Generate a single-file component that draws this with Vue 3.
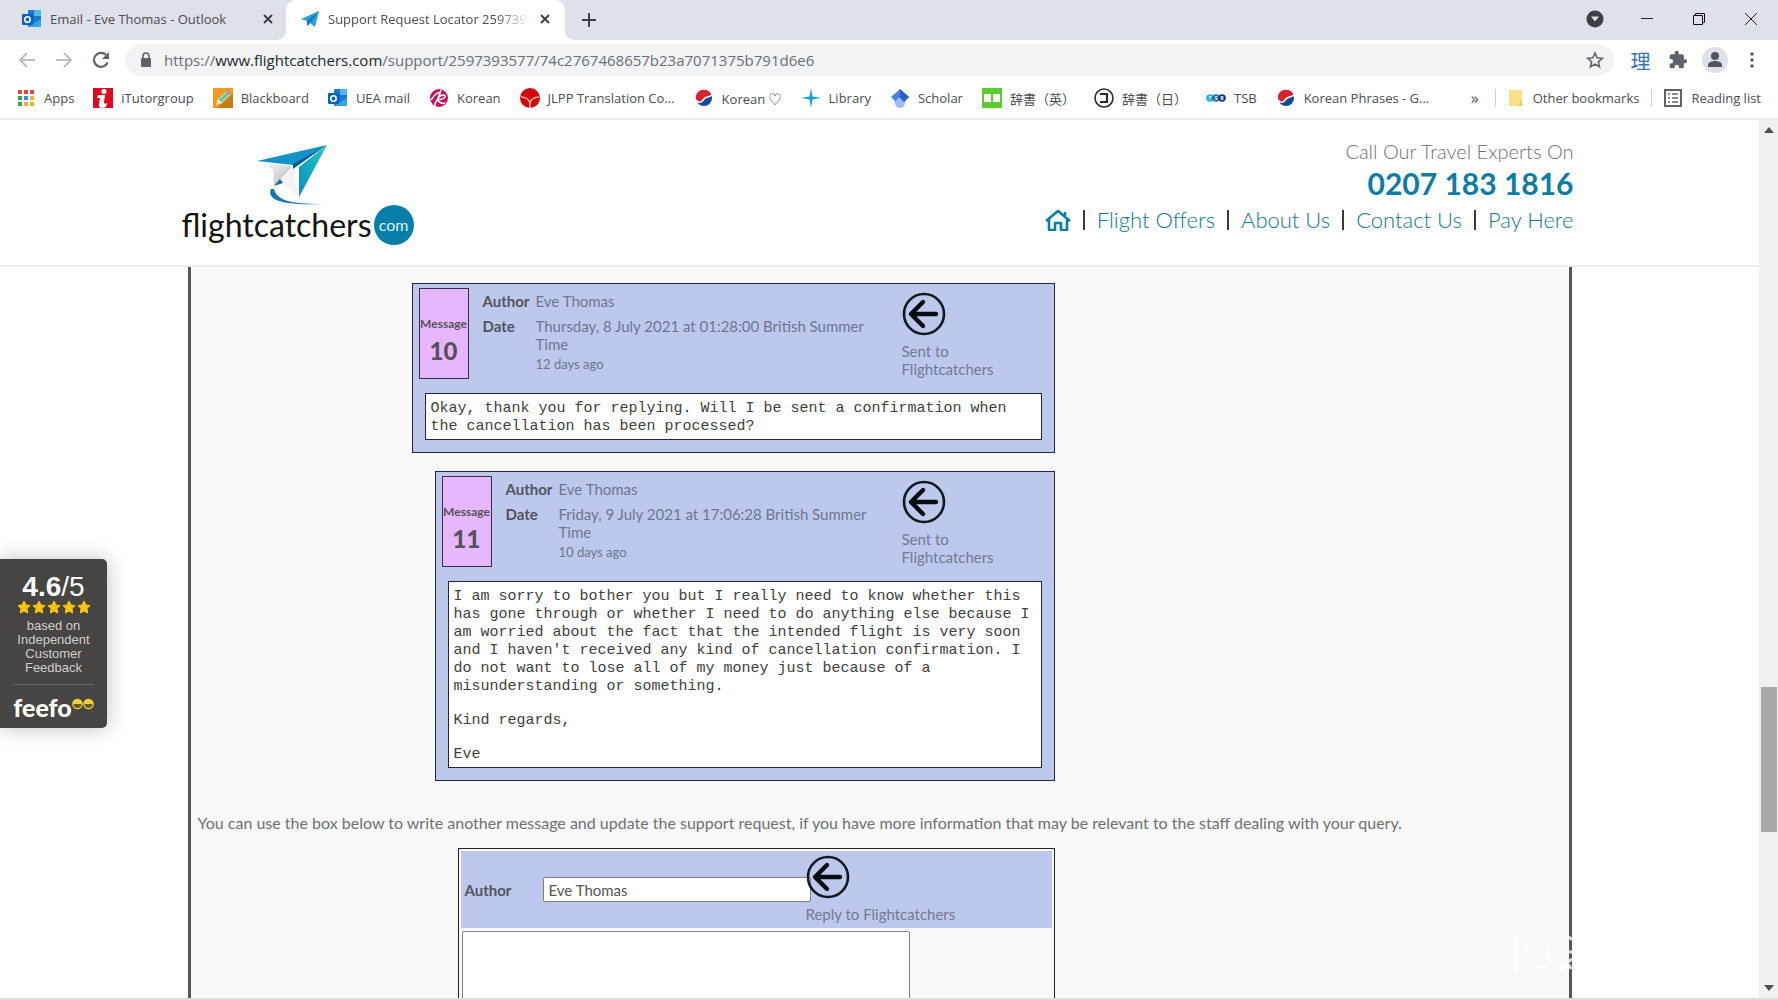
<script setup>
import { ref } from 'vue'

const tabs = ref([
  { title: "Email - Eve Thomas - Outlook", icon: "outlook", active: false },
  { title: "Support Request Locator 259739", icon: "plane", active: true },
]);

const bookmarks = [
  { title: "Apps", icon: "apps" },
  { title: "iTutorgroup", icon: "itutor" },
  { title: "Blackboard", icon: "pencil" },
  { title: "UEA mail", icon: "outlook" },
  { title: "Korean", icon: "pink" },
  { title: "JLPP Translation Co...", icon: "jlpp" },
  { title: "Korean ♡", icon: "taegeuk" },
  { title: "Library", icon: "spark" },
  { title: "Scholar", icon: "scholar" },
  { title: "辞書（英）", icon: "book" },
  { title: "辞書（日）", icon: "kotoba" },
  { title: "TSB", icon: "tsb" },
  { title: "Korean Phrases - G...", icon: "taegeuk" },
];

const links = ["Flight Offers", "About Us", "Contact Us", "Pay Here"];

const messages = [
  {
    number: 10,
    author: "Eve Thomas",
    date: "Thursday, 8 July 2021 at 01:28:00 British Summer Time",
    ago: "12 days ago",
    text: ["Okay, thank you for replying. Will I be sent a confirmation when the cancellation has been processed?"],
  },
  {
    number: 11,
    author: "Eve Thomas",
    date: "Friday, 9 July 2021 at 17:06:28 British Summer Time",
    ago: "10 days ago",
    text: [
      "I am sorry to bother you but I really need to know whether this has gone through or whether I need to do anything else because I am worried about the fact that the intended flight is very soon and I haven't received any kind of cancellation confirmation. I do not want to lose all of my money just because of a misunderstanding or something.",
      "Kind regards,",
      "Eve",
    ],
  },
];

const author = ref("Eve Thomas");
const reply = ref("");
const url = ref("/support/2597393577/74c2767468657b23a7071375b791d6e6");
</script>

<template>
  <div class="browser">
    <!-- icons used more than once -->
    <svg class="defs" width="0" height="0" aria-hidden="true">
      <symbol id="outlook" viewBox="0 0 20 20">
        <rect x="6" y="1" width="13" height="17" rx="1" fill="#1a78d0" />
        <path d="M12 1h7v6h-7z" fill="#4db8f2" />
        <path d="M6 7h6v5H6z" fill="#1261b4" />
        <path d="M6 18l13-8v8z" fill="#35a4e8" />
        <rect x="0" y="5" width="11" height="11" rx="1" fill="#0a63bb" />
        <circle cx="5.5" cy="10.500" r="2.700" fill="none" stroke="#fff" stroke-width="1.600" />
      </symbol>
      <symbol id="plane" viewBox="0 0 20 20">
        <path d="M1 10L19 2l-4 16-5-4-3 3v-5z" fill="#2a9fd8" />
        <path d="M7 12L19 2l-9 12-3 3z" fill="#1678ba" />
      </symbol>
      <symbol id="apps" viewBox="0 0 20 20">
        <path d="M2 2h4v4H2zM8 2h4v4H8zM14 2h4v4h-4z" fill="#e0493c" />
        <path d="M2 8h4v4H2z" fill="#35a457" />
        <path d="M8 8h4v4H8z" fill="#3d84ee" />
        <path d="M14 8h4v4h-4zM8 14h4v4H8zM14 14h4v4h-4z" fill="#f2ae2c" />
        <path d="M2 14h4v4H2z" fill="#35a457" />
      </symbol>
      <symbol id="itutor" viewBox="0 0 20 20">
        <path d="M0 0h20v20H0z" fill="#dc0a1c" />
        <circle cx="11" cy="3.500" r="2.500" fill="#fff" />
        <path d="M5 7h7l-1 7c0 2 1 2 3 1l-1 4c-4 2-8 1-7-3l1-6H4z" fill="#fff" />
      </symbol>
      <symbol id="pencil" viewBox="0 0 20 20">
        <path d="M0 0h20v20H0z" fill="#f09a1e" />
        <path d="M20 6v14H4z" fill="#c87a12" />
        <path d="M3 17l2-6 8-8 4 4-8 8z" fill="#8fd3b6" />
        <path d="M3 17l2-6 4 4z" fill="#fbe6c0" />
        <path d="M13 3l2-1 3 3-1 2z" fill="#f07e86" />
        <path d="M7 13l8-8" stroke="#3f8f78" />
      </symbol>
      <symbol id="pink" viewBox="0 0 20 20">
        <circle cx="10" cy="10" r="9" fill="#c4125e" />
        <path d="M2 12c5-7 8-9 9-6s-6 7-5 12M10 9c4-3 7-2 6 0s-5 3-7 2 2 6 7 4M12 2l-3 8" fill="none" stroke="#fff" stroke-width="1.500" />
      </symbol>
      <symbol id="jlpp" viewBox="0 0 20 20">
        <circle cx="10" cy="10" r="10" fill="#cf0a0f" />
        <path d="M1 9c5 0 8 3 9 6 1-3 4-6 9-6M10 15v5" fill="none" stroke="#f3b4a8" stroke-width="1.500" />
      </symbol>
      <symbol id="taegeuk" viewBox="0 0 20 20">
        <circle cx="10" cy="10" r="8" fill="#164a92" />
        <path d="M2 11a8 8 0 0 1 15-5c-1 5-5 2-7 5s-6 4-8 0z" fill="#d8222f" />
        <path d="M2 12c3 4 6 2 8-1s5-1 8-4" fill="none" stroke="#fff" stroke-width="1.500" />
      </symbol>
      <symbol id="spark" viewBox="0 0 20 20">
        <path d="M10 0l1.500 8.500L20 10l-8.500 1.500L10 20l-1.500-8.500L0 10l8.500-1.500z" fill="#16a3dc" />
      </symbol>
      <symbol id="scholar" viewBox="0 0 20 20">
        <path d="M5 10h10v5a5 5 0 0 1-10 0z" fill="#9dbdf8" />
        <path d="M10 1l9 8-5 5a4 4 0 0 0-8 0L1 9z" fill="#4a80ea" />
        <path d="M10 1l9 8-5 5-4-4z" fill="#3160c4" />
      </symbol>
      <symbol id="book" viewBox="0 0 20 20">
        <path d="M0 0h20v20H0z" fill="#5bcb2e" />
        <path d="M2 6h7v8H2zM11 6h7v8h-7z" fill="#fff" />
      </symbol>
      <symbol id="kotoba" viewBox="0 0 20 20">
        <circle cx="10" cy="10" r="9" fill="none" stroke="#2b2b2b" stroke-width="1.600" />
        <path d="M6 6h7v8H6" fill="none" stroke="#2b2b2b" stroke-width="2.200" />
      </symbol>
      <symbol id="tsb" viewBox="0 0 20 20">
        <circle cx="4" cy="10" r="3.800" fill="#22b2e4" />
        <circle cx="10" cy="10" r="3.800" fill="#1f6fb8" />
        <circle cx="16" cy="10" r="3.800" fill="#1c3282" />
        <path d="M3 8.500h2.500M4 8.500v3M11.500 8.500h-2v1.500h1.500v1.500h-2M15 8.500h2v3h-2zM15 10h2" stroke="#fff" stroke-width=".8" fill="none" />
      </symbol>
      <symbol id="arrow" viewBox="0 0 44 44">
        <circle cx="22" cy="22" r="20" fill="none" stroke="#101820" stroke-width="2.600" />
        <path d="M34 22H10M21 10L9 22l12 12" fill="none" stroke="#080c10" stroke-width="4.400" stroke-linecap="round" stroke-linejoin="round" />
      </symbol>
    </svg>

    <div class="tab-strip">
      <div v-for="tab in tabs" :key="tab.title" class="tab" :class="{ active: tab.active }">
        <svg class="icon"><use :href="'#' + tab.icon" /></svg>
        <span class="tab-title">{{ tab.title }}</span>
        <button class="tab-close" aria-label="Close tab">
          <svg width="12" height="12" viewBox="0 0 12 12"><path d="M2 2l8 8M10 2l-8 8" stroke="#3c4043" stroke-width="2" /></svg>
        </button>
      </div>
      <button class="new-tab" aria-label="New tab">
        <svg width="16" height="16" viewBox="0 0 16 16"><path d="M8 1v14M1 8h14" stroke="#3c4043" stroke-width="2" /></svg>
      </button>
      <div class="window-buttons">
        <button aria-label="Search tabs">
          <svg width="18" height="18" viewBox="0 0 18 18"><circle cx="9" cy="9" r="8.500" fill="#3c4043" /><path d="M5 6.500h8l-4 5z" fill="#dee1e6" /></svg>
        </button>
        <button aria-label="Minimise">
          <svg width="14" height="14" viewBox="0 0 14 14"><path d="M1 6.500h12" stroke="#222" /></svg>
        </button>
        <button aria-label="Restore">
          <svg width="14" height="14" viewBox="0 0 14 14"><path d="M1.500 3.500h9v9h-9zM3.500 3.500v-2h9v9h-2" fill="none" stroke="#111" /></svg>
        </button>
        <button aria-label="Close">
          <svg width="14" height="14" viewBox="0 0 14 14"><path d="M1 1l12 12M13 1L1 13" stroke="#222" /></svg>
        </button>
      </div>
    </div>

    <div class="toolbar">
      <button class="tool" aria-label="Back">
        <svg width="18" height="18" viewBox="0 0 18 18"><path d="M17 9H2M9 2L2 9l7 7" fill="none" stroke="#bcbfc3" stroke-width="2" /></svg>
      </button>
      <button class="tool" aria-label="Forward">
        <svg width="18" height="18" viewBox="0 0 18 18"><path d="M1 9h15M9 2l7 7-7 7" fill="none" stroke="#bcbfc3" stroke-width="2" /></svg>
      </button>
      <button class="tool" aria-label="Reload">
        <svg width="18" height="18" viewBox="0 0 18 18"><path d="M15.500 11.500a7 7 0 1 1-1.500-7.500" fill="none" stroke="#5f6368" stroke-width="2.200" /><path d="M17 1v7h-7z" fill="#5f6368" /></svg>
      </button>
      <div class="address">
        <svg width="12" height="16" viewBox="0 0 12 16"><path d="M3 7V4a3 3 0 0 1 6 0v3" fill="none" stroke="#5f6368" stroke-width="1.600" /><rect x="1" y="6" width="10" height="9" rx="1" fill="#5f6368" /></svg>
        <span class="url">https://<b>www.flightcatchers.com</b>{{ url }}</span>
        <button class="star" aria-label="Bookmark this page">
          <svg width="18" height="18" viewBox="0 0 18 18"><path d="M9 2l2.100 4.800 5.200.5-3.900 3.400 1.100 5.100L9 13.100l-4.500 2.700 1.100-5.100-3.900-3.400 5.200-.5z" fill="none" stroke="#5f6368" stroke-width="1.600" /></svg>
        </button>
      </div>
      <button class="tool rikai" aria-label="Dictionary">理</button>
      <button class="tool" aria-label="Extensions">
        <svg width="20" height="20" viewBox="0 0 24 24"><path d="M20.500 11H19V7a2 2 0 0 0-2-2h-4V3.500a2.500 2.500 0 0 0-5 0V5H4a2 2 0 0 0-2 2v3.800h1.500a2.700 2.700 0 0 1 0 5.400H2V20a2 2 0 0 0 2 2h3.800v-1.500a2.700 2.700 0 0 1 5.400 0V22H17a2 2 0 0 0 2-2v-4h1.500a2.500 2.500 0 0 0 0-5z" fill="#5f6368" /></svg>
      </button>
      <button class="tool" aria-label="Profile">
        <svg width="26" height="26" viewBox="0 0 26 26"><circle cx="13" cy="13" r="13" fill="#dee1e6" /><circle cx="13" cy="9" r="4" fill="#51555f" /><path d="M6 20v-2c0-3 4-4 7-4s7 1 7 4v2z" fill="#51555f" /></svg>
      </button>
      <button class="tool" aria-label="Menu">
        <svg width="4" height="16" viewBox="0 0 4 16"><circle cx="2" cy="2" r="1.800" fill="#5f6368" /><circle cx="2" cy="8" r="1.800" fill="#5f6368" /><circle cx="2" cy="14" r="1.800" fill="#5f6368" /></svg>
      </button>
    </div>

    <div class="bookmarks">
      <a v-for="mark in bookmarks" :key="mark.title" href="#" class="bookmark">
        <svg class="icon"><use :href="'#' + mark.icon" /></svg>{{ mark.title }}
      </a>
      <div class="bookmarks-end">
        <button class="more" aria-label="More bookmarks">»</button>
        <a href="#" class="bookmark divided">
          <svg width="16" height="18" viewBox="0 0 16 18"><path d="M1 1h13v16H1z" fill="#fbe08a" /><path d="M12 12h2v5h-3z" fill="#f0c95c" /></svg>Other bookmarks
        </a>
        <a href="#" class="bookmark divided">
          <svg width="18" height="18" viewBox="0 0 18 18"><path d="M1 1h16v16H1z" fill="none" stroke="#5f6368" stroke-width="2" /><path d="M4 5h2M4 9h2M4 13h2M8 5h6M8 9h6M8 13h6" stroke="#5f6368" stroke-width="1.600" /></svg>Reading list
        </a>
      </div>
    </div>

    <div class="viewport">
      <div class="page">
        <header>
          <div class="header-inner">
            <a href="#" class="logo" aria-label="flightcatchers.com">
              <svg width="70" height="64" viewBox="0 0 70 64">
                <defs>
                  <linearGradient id="wing" x1="0" y1="1" x2="1" y2="0">
                    <stop offset="0" stop-color="#0b8fc0" />
                    <stop offset="1" stop-color="#22c9c0" />
                  </linearGradient>
                  <linearGradient id="fold" x1="0" y1="0" x2="1" y2="1">
                    <stop offset="0" stop-color="#fff" />
                    <stop offset="1" stop-color="#b4b6b8" />
                  </linearGradient>
                </defs>
                <path d="M2 19l34 4-19 20-1-16z" fill="url(#fold)" />
                <path d="M36 25l5 28-18-15z" fill="#f3f3f4" />
                <path d="M0 18L70 2 36 22z" fill="#1491c9" />
                <path d="M70 2L36 21v5z" fill="#0a5d8f" />
                <path d="M70 2L42 54V24z" fill="url(#wing)" />
                <path d="M17 43l6-7 3 4z" fill="#126a9c" />
                <path d="M14 46c-4 9 6 17 52 15-34 0-46-4-49-15" fill="#1579ad" />
              </svg>
              <span class="brand">flightcatchers<span class="com">com</span></span>
            </a>
            <div class="contact">
              <div class="call">Call Our Travel Experts On</div>
              <div class="phone">0207 183 1816</div>
              <nav>
                <a href="#" aria-label="Home">
                  <svg width="26" height="22" viewBox="0 0 26 22"><path d="M1 12L13 2l12 10M4 10v11h6v-7h6v7h6V10M20 8V3" fill="none" stroke="#087fa5" stroke-width="2.600" stroke-linejoin="round" /></svg>
                </a>
                <a v-for="link in links" :key="link" href="#">{{ link }}</a>
              </nav>
            </div>
          </div>
        </header>

        <main>
          <div class="thread">
            <article v-for="(message, i) in messages" :key="message.number" class="message" :style="{ marginLeft: i * 23 + 'px' }">
              <div class="message-head">
                <div class="badge">
                  <span>Message</span>
                  <b>{{ message.number }}</b>
                </div>
                <dl>
                  <dt>Author</dt>
                  <dd>{{ message.author }}</dd>
                  <dt>Date</dt>
                  <dd>{{ message.date }}<small>{{ message.ago }}</small></dd>
                </dl>
                <div class="direction">
                  <svg class="arrow"><use href="#arrow" /></svg>
                  <p>Sent to Flightcatchers</p>
                </div>
              </div>
              <div class="message-text">
                <p v-for="line in message.text" :key="line">{{ line }}</p>
              </div>
            </article>
          </div>

          <p class="hint">You can use the box below to write another message and update the support request, if you have more information that may be relevant to the staff dealing with your query.</p>

          <div class="thread">
            <form class="reply" @submit.prevent>
              <div class="reply-head">
                <label for="author">Author</label>
                <input id="author" type="text" v-model="author">
                <div class="direction">
                  <svg class="arrow"><use href="#arrow" /></svg>
                  <p>Reply to Flightcatchers</p>
                </div>
              </div>
              <textarea v-model="reply" rows="10" aria-label="Message"></textarea>
            </form>
          </div>
        </main>

        <aside class="feefo">
          <div class="score"><b>4.6</b>/5</div>
          <svg width="72" height="13" viewBox="0 0 72 13">
            <path v-for="n in 5" :key="n" :transform="`translate(${(n - 1) * 15})`" d="M6 0l2 4 4 .6-3 3 .7 4.400L6 10l-3.700 2L3 7.600l-3-3L4 4z" fill="#fdc40c" stroke="#fdc40c" />
          </svg>
          <p>based on Independent Customer Feedback</p>
          <div class="feefo-logo">
            <span>feefo</span>
            <svg width="22" height="12" viewBox="0 0 22 12">
              <circle cx="5.500" cy="6" r="5.300" fill="#f2cf3a" />
              <circle cx="16.500" cy="6" r="5.300" fill="#f2cf3a" />
              <path d="M1.500 6h8a4 4 0 0 1-8 0zM12.500 6h8a4 4 0 0 1-8 0z" fill="#6a5a2a" />
            </svg>
          </div>
        </aside>

        <!-- pale mark over the bottom right corner -->
        <svg class="mark" width="58" height="40" viewBox="0 0 58 40" aria-hidden="true">
          <path d="M2 3v34M12 8v12M22 32h12M34 14v12M53 2c3 0 4 1 5 3M53 17h5M54 27l4-3M47 36c4-8 8-8 10-2" fill="none" stroke="#fff" stroke-width="3" opacity=".8" />
        </svg>
      </div>

      <div class="scrollbar">
        <svg width="10" height="6" viewBox="0 0 10 6"><path d="M0 6l5-6 5 6z" fill="#505050" /></svg>
        <div class="track"><div class="thumb"></div></div>
        <svg width="10" height="6" viewBox="0 0 10 6"><path d="M0 0l5 6 5-6z" fill="#505050" /></svg>
      </div>
    </div>
  </div>
</template>

<style>
body {
  margin: 0;
}
</style>

<style scoped>
* {
  box-sizing: border-box;
}

p,
dl,
dd {
  margin: 0;
}

a {
  color: inherit;
  text-decoration: none;
}

button {
  display: flex;
  align-items: center;
  justify-content: center;
  padding: 0;
  border: none;
  background: none;
  color: inherit;
  font: inherit;
  cursor: pointer;
}

svg {
  flex: none;
}

.defs {
  position: absolute;
}

.browser {
  height: 100vh;
  display: flex;
  flex-direction: column;
  overflow: hidden;
  background-color: white;
  border-bottom: 2px solid #dddddf;
  color: #4a4d51;
  font-family: "Open Sans", "Noto Sans CJK JP", sans-serif;
  font-size: 13px;
}

.icon {
  width: 20px;
  height: 20px;
}

.tab-strip {
  display: flex;
  align-items: center;
  height: 40px;
  background-color: #dee1e8;
}

.tab {
  display: flex;
  align-items: center;
  gap: 8px;
  width: 286px;
  height: 40px;
  padding: 0 10px 2px 22px;
}

.tab.active {
  position: relative;
  width: 279px;
  padding: 0 12px 2px 14px;
  border-radius: 10px 10px 0 0;
  background-color: white;
}

/* flared feet of the open tab */
.tab.active::before,
.tab.active::after {
  content: "";
  position: absolute;
  bottom: 0;
  width: 10px;
  height: 10px;
}

.tab.active::before {
  right: 100%;
  background: radial-gradient(circle at 0 0, transparent 10px, white 10px);
}

.tab.active::after {
  left: 100%;
  background: radial-gradient(circle at 100% 0, transparent 10px, white 10px);
}

.tab-title {
  flex: 1;
  white-space: nowrap;
}

.active .tab-title {
  mask-image: linear-gradient(to left, transparent, black 32px);
}

.tab-close {
  width: 16px;
  height: 16px;
}

.new-tab {
  width: 48px;
  height: 36px;
}

.window-buttons {
  display: flex;
  margin: 0 1px 2px auto;
}

.window-buttons button {
  width: 52px;
  height: 36px;
}

.toolbar {
  display: flex;
  align-items: center;
  height: 40px;
  padding: 0 8px;
}

.tool {
  width: 37px;
  height: 34px;
}

.address {
  flex: 1;
  display: flex;
  align-items: center;
  gap: 12px;
  height: 32px;
  margin: 0 8px 0 6px;
  padding: 0 10px 0 15px;
  border-radius: 16px;
  background-color: #f1f3f4;
  color: #6b6f74;
  font-size: 15px;
}

.url {
  flex: 1;
}

.url b {
  color: #26282b;
  font-weight: 400;
}

.rikai {
  color: #3a72b4;
  font-size: 20px;
}

.bookmarks {
  display: flex;
  align-items: center;
  gap: 19px;
  height: 40px;
  padding: 0 17px 2px 16px;
  border-bottom: 2px solid #ebebec;
  white-space: nowrap;
}

.bookmark {
  display: flex;
  align-items: center;
  gap: 8px;
}

.bookmarks-end {
  display: flex;
  align-items: center;
  gap: 12px;
  margin-left: auto;
}

.more {
  margin-right: 4px;
  font-size: 16px;
}

.divided {
  gap: 9px;
  padding-left: 12px;
  border-left: 1px solid #cfd1d4;
}

.viewport {
  flex: 1;
  display: flex;
  min-height: 0;
}

.page {
  position: relative;
  flex: 1;
  display: flex;
  flex-direction: column;
  overflow: hidden;
  color: #6e7073;
  font-family: Lato, sans-serif;
  font-size: 15px;
  line-height: 18px;
}

header {
  flex: none;
  border-bottom: 2px solid #ececec;
}

.header-inner {
  display: flex;
  justify-content: space-between;
  max-width: 1396px;
  height: 145px;
  margin: 0 auto;
  padding-right: 4px;
}

.logo {
  display: flex;
  flex-direction: column;
  padding-top: 23px;
  color: #151515;
}

.logo svg {
  margin-left: 75px;
}

.brand {
  display: flex;
  align-items: center;
  height: 36px;
  font-size: 32px;
}

.com {
  display: flex;
  align-items: center;
  justify-content: center;
  width: 40px;
  height: 40px;
  margin-left: 2px;
  border-radius: 50%;
  background-color: #087fa8;
  color: #d8f0f7;
  font-size: 16px;
}

.contact {
  display: flex;
  flex-direction: column;
  align-items: flex-end;
  padding-top: 19px;
}

.call {
  font-size: 20px;
  font-weight: 300;
  line-height: 24px;
}

.phone {
  color: #0e7da6;
  font-size: 30px;
  font-weight: 700;
  line-height: 40px;
}

nav {
  display: flex;
  align-items: center;
  margin-top: 6px;
  color: #137890;
  font-size: 22px;
  font-weight: 300;
  line-height: 20px;
}

nav a {
  display: flex;
}

nav a + a {
  margin-left: 12px;
  padding-left: 12px;
  border-left: 2px solid #3c3c3c;
}

main {
  flex: 1;
  width: calc(100% - 14px);
  max-width: 1384px;
  min-height: 0;
  margin: 0 auto;
  padding: 16px 7px 0;
  border: solid #565656;
  border-width: 0 3px;
  background-color: #f9f9f9;
}

.thread {
  display: flex;
  flex-direction: column;
  gap: 18px;
  width: 643px;
  margin-left: 214px;
}

.message {
  padding-bottom: 12px;
  border: 1px solid #22263a;
  background-color: #bec8ed;
}

.message-head {
  display: flex;
  height: 109px;
  padding: 4px 6px 0;
}

.badge {
  display: flex;
  flex-direction: column;
  align-items: center;
  gap: 9px;
  flex: none;
  width: 50px;
  height: 91px;
  padding-top: 26px;
  border: 1px solid #3a2c48;
  background-color: #e6b8fb;
  color: #57505e;
  font-size: 12px;
  font-weight: 700;
}

.badge b {
  font-size: 24px;
}

dl {
  display: grid;
  grid-template-columns: 53px 1fr;
  align-content: start;
  row-gap: 7px;
  flex: 1;
  padding: 4px 0 0 14px;
}

dt,
label {
  color: #50545c;
  font-weight: 700;
}

small {
  display: block;
  margin-top: 2px;
  font-size: 13px;
}

.direction {
  color: #737a92;
}

.message .direction {
  width: 146px;
  margin-left: 20px;
  padding: 4px 46px 0 0;
}

dd {
  color: #6f7690;
}

.arrow {
  display: block;
  width: 44px;
  height: 44px;
  margin-bottom: 6px;
}

.message-text {
  display: flex;
  flex-direction: column;
  gap: 16px;
  margin: 0 12px;
  padding: 6px 5px 3px;
  border: 1px solid #22263a;
  background-color: white;
  color: #404040;
  font-family: "Liberation Mono", monospace;
}

.hint {
  padding: 33px 0 16px;
  font-size: 16px;
}

.reply {
  margin-left: 46px;
  padding: 2px;
  border: 1px solid #222;
}

.reply-head {
  display: grid;
  grid-template-columns: 78px 263px 1fr;
  align-items: center;
  height: 77px;
  padding-left: 4px;
  background-color: #bec8ed;
}

.reply-head .direction {
  position: relative;
  padding-bottom: 2px;
}

input {
  width: 268px;
  height: 25px;
  padding: 0 5px;
  border: 1px solid #7c7f8c;
  border-radius: 2px;
  color: #555;
  font: inherit;
}

textarea {
  display: block;
  width: 448px;
  margin: 3px 0 0 1px;
  padding: 4px;
  border: 1px solid #80838a;
  border-radius: 2px;
  font: inherit;
  resize: none;
}

.feefo {
  position: absolute;
  top: 439px;
  left: 0;
  display: flex;
  flex-direction: column;
  align-items: center;
  width: 107px;
  padding: 14px 12px 7px;
  border-radius: 0 5px 5px 0;
  background-color: #474444;
  box-shadow: 0 0 20px rgba(0, 0, 0, 0.25);
  color: #d0cece;
  font-family: "Liberation Sans", sans-serif;
  font-size: 13px;
  line-height: 14px;
  text-align: center;
}

.score {
  color: white;
  font-size: 28px;
  line-height: 28px;
}

.feefo p {
  padding: 5px 4px 9px;
}

.feefo-logo {
  display: flex;
  padding-top: 8px;
  border-top: 1px solid #6b6868;
}

.feefo-logo svg {
  margin-top: 5px;
}

.feefo-logo span {
  color: white;
  font-family: Lato, sans-serif;
  font-size: 25px;
  font-weight: 900;
  line-height: 28px;
}

.mark {
  position: absolute;
  right: 187px;
  bottom: 23px;
}

.scrollbar {
  display: flex;
  flex-direction: column;
  align-items: center;
  width: 19px;
  padding: 7px 1px;
  background-color: #f0f0f0;
}

.track {
  flex: 1;
  display: flex;
  flex-direction: column;
  width: 16px;
}

.track::before {
  content: "";
  flex: 65;
}

.track::after {
  content: "";
  flex: 18;
}

.thumb {
  flex: 17;
  background-color: #a8a8a8;
}
</style>
